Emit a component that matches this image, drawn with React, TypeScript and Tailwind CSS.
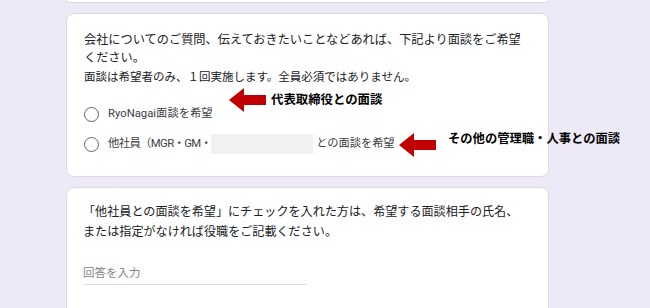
import React from 'react';

const font = { fontFamily: 'Roboto, "Noto Sans CJK JP", sans-serif' };

function Arrow() {
  return (
    <svg width="37" height="24" viewBox="0 0 37 24" className="block">
      <polygon points="0,12 15,0 15,7 37,7 37,17 15,17 15,24" fill="#c00000" />
    </svg>
  );
}

function Radio() {
  return <div className="w-[15px] h-[15px] shrink-0 rounded-full border-[1.6px] border-[#5f6368] bg-white" />;
}

export default function App() {
  return (
    <div className="w-[650px] h-[308px] overflow-hidden bg-[#ede9f6]" style={font}>
      <div className="ml-[66px] w-[483px] flex flex-col">
        {/* 前の質問カードの下端 */}
        <div className="h-[3px] bg-white rounded-b-lg border-b border-x border-[#dcd9e3]" />

        {/* 面談希望 */}
        <div className="mt-[10px] h-[164px] bg-white rounded-lg border border-[#dcd9e3] pl-[17px] pt-[17px] text-[#202124]">
          <p className="text-[12.2px] leading-[18px]">
            会社についてのご質問、伝えておきたいことなどあれば、下記より面談をご希望
            <br />
            ください。
          </p>
          <p className="mt-[1px] text-[11.5px] leading-[18px]">面談は希望者のみ、１回実施します。全員必須ではありません。</p>

          <div className="mt-[18px] flex flex-col gap-[10px] text-[11.3px] text-[#3c4043]">
            <div className="relative h-[20px] flex items-center">
              <Radio />
              <span className="ml-[9px]">RyoNagai面談を希望</span>
              <div className="absolute left-[145px] top-[-16px] flex items-center">
                <Arrow />
                <span className="ml-[5px] text-[12.4px] font-bold text-black">代表取締役との面談</span>
              </div>
            </div>
            <div className="relative h-[20px] flex items-center">
              <Radio />
              <span className="ml-[9px] tracking-[-0.6px]">他社員（MGR・GM・</span>
              <div className="w-[102px] h-[20px] bg-[#f1f1f1]" />
              <span className="ml-[3px] tracking-[-0.1px]">との面談を希望</span>
              <div className="absolute left-[315px] top-[-1px] flex items-center">
                <Arrow />
              </div>
              <span className="absolute left-[364px] top-[-5px] leading-[20px] whitespace-nowrap text-[12.3px] font-bold text-black">
                その他の管理職・人事との面談
              </span>
            </div>
          </div>
        </div>

        {/* 面談相手 */}
        <div className="mt-[10px] h-[140px] bg-white rounded-lg border border-[#dcd9e3] pl-[16px] pt-[14px] text-[#202124]">
          <p className="text-[12.1px] leading-[20px]">
            「他社員との面談を希望」にチェックを入れた方は、希望する面談相手の氏名、
            <br />
            または指定がなければ役職をご記載ください。
          </p>
          <div className="mt-[23px] w-[224px]">
            <div className="text-[11.5px] leading-[16px] text-[#80868b]">回答を入力</div>
            <div className="mt-[3px] h-px bg-[#e0e0e0]" />
          </div>
        </div>
      </div>
    </div>
  );
}
